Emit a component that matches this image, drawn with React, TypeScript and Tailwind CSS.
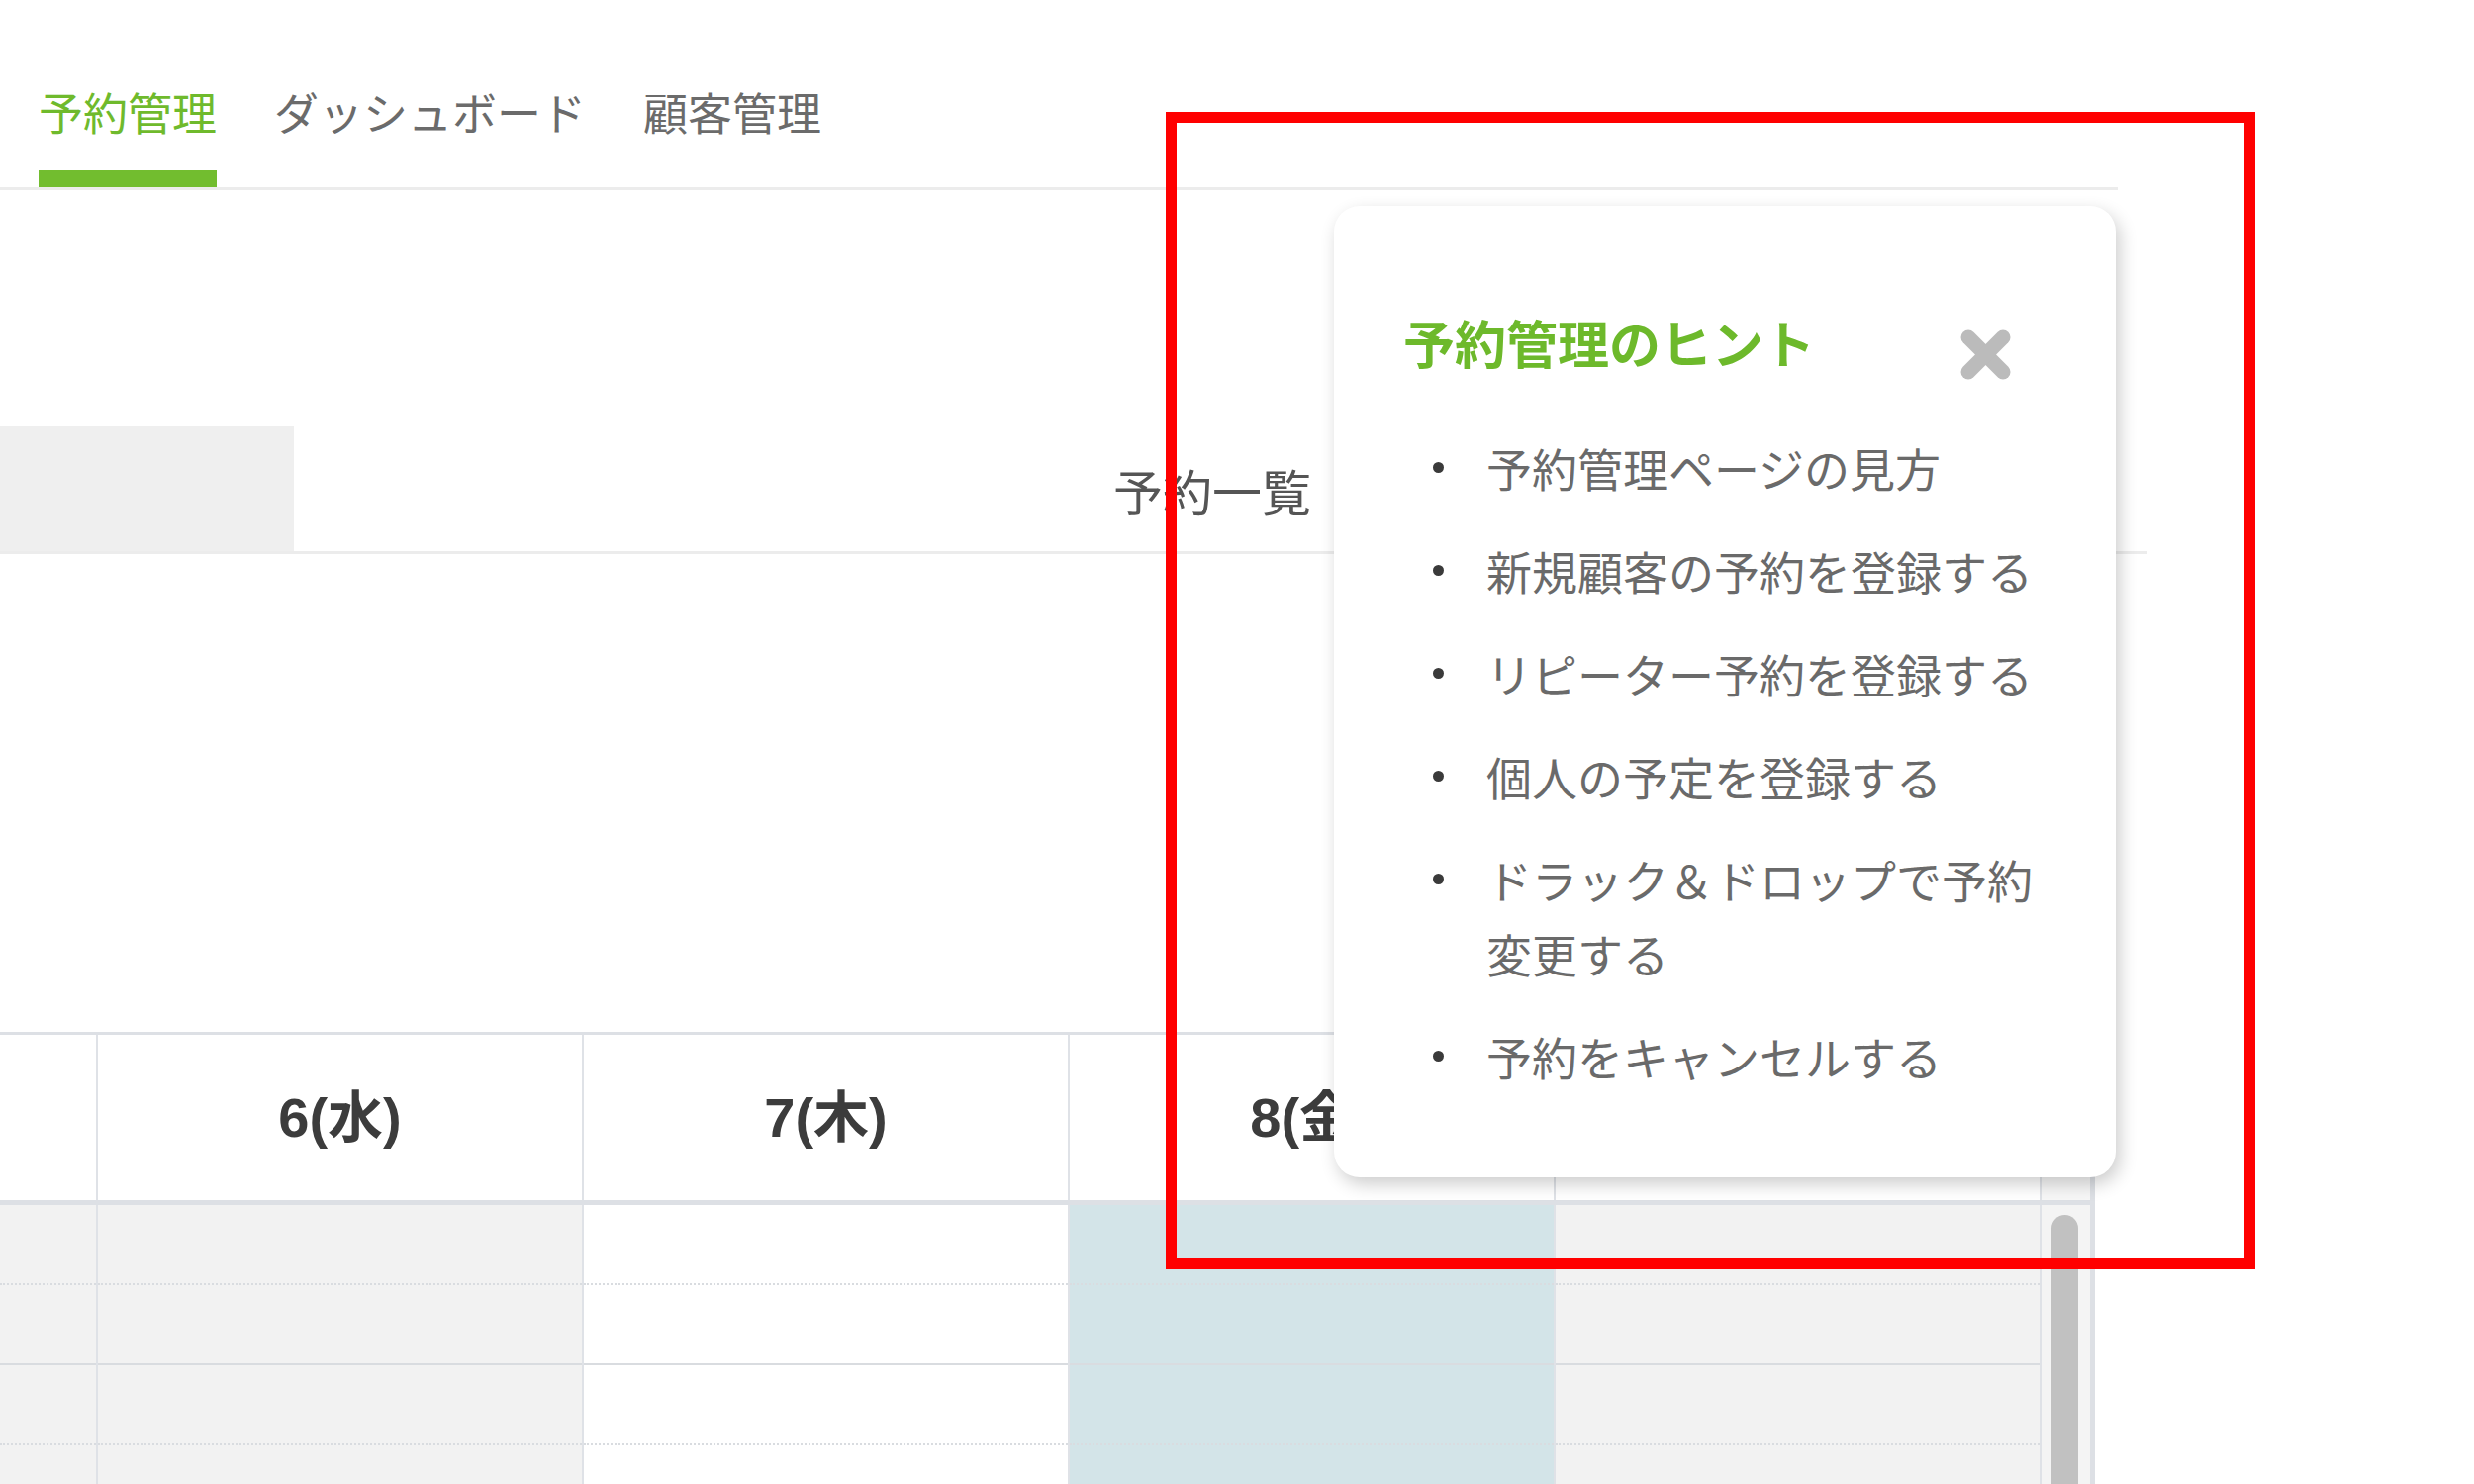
import React from 'react';

const tabs = [
  { label: '予約管理', active: true },
  { label: 'ダッシュボード', active: false },
  { label: '顧客管理', active: false },
];

const days = ['6(水)', '7(木)', '8(金)', '9(土)'];

const columns = [
  { width: 'w-[99px]', bg: 'bg-[#f2f2f2]' },
  { width: 'w-[491px]', bg: 'bg-[#f2f2f2]' },
  { width: 'w-[491px]', bg: 'bg-white' },
  { width: 'w-[491px]', bg: 'bg-[#d3e4e8]' },
  { width: 'w-[491px]', bg: 'bg-[#f2f2f2]' },
];

const hints = [
  '予約管理ページの見方',
  '新規顧客の予約を登録する',
  'リピーター予約を登録する',
  '個人の予定を登録する',
  'ドラック＆ドロップで予約変更する',
  '予約をキャンセルする',
];

const CloseIcon: React.FC = () => (
  <svg width="53" height="53" viewBox="0 0 53 53" className="shrink-0">
    <g stroke="#bbbbbb" strokeWidth="15" strokeLinecap="round">
      <line x1="9" y1="9" x2="44" y2="44" />
      <line x1="44" y1="9" x2="9" y2="44" />
    </g>
  </svg>
);

const HintCard: React.FC = () => (
  <div className="absolute left-[1348px] top-[208px] w-[790px] rounded-[26px] bg-white pl-[70px] pr-[70px] pt-[108px] pb-[85px] shadow-[4px_7px_18px_rgba(0,0,0,0.2)]">
    <div className="flex items-start justify-between pr-[35px]">
      <h3 className="text-[52px] leading-[60px] font-bold text-[#6db92b]">予約管理のヒント</h3>
      <div className="mt-[16px]">
        <CloseIcon />
      </div>
    </div>
    <ul className="mt-[50px] pl-[30px] flex flex-col gap-[29px]">
      {hints.map((hint) => (
        <li key={hint} className="flex items-start">
          <span className="flex h-[75px] w-[54px] shrink-0 items-center">
            <span className="h-[11px] w-[11px] rounded-full bg-[#3a3a3a]" />
          </span>
          <span className="w-[566px] text-[46px] leading-[75px] text-[#6a6a6a]">{hint}</span>
        </li>
      ))}
    </ul>
  </div>
);

const App: React.FC = () => {
  return (
    <div className="relative h-[1500px] w-[2500px] overflow-hidden bg-white font-['Noto_Sans_CJK_JP',sans-serif]">
      {/* tabs */}
      <div className="flex h-[192px] w-[2140px] items-end gap-[52px] border-b-[3px] border-[#ececec] pl-[36px]">
        {tabs.map((tab) => (
          <div key={tab.label} className="flex flex-col px-[3px]">
            <span className={`text-[45px] leading-[45px] ${tab.active ? 'text-[#6fba2c]' : 'text-[#6b6b6b]'}`}>
              {tab.label}
            </span>
            <span className={`mt-[37px] h-[17px] ${tab.active ? 'bg-[#72bd2f]' : 'bg-transparent'}`} />
          </div>
        ))}
      </div>

      {/* toolbar */}
      <div className="flex h-[368px] w-[2170px] items-end border-b-[3px] border-[#ececec]">
        <div className="h-[126px] w-[297px] bg-[#efefef]" />
        <span className="ml-[828px] mb-[37px] text-[50px] leading-[50px] text-[#555]">予約一覧</span>
      </div>

      <div className="h-[483px]" />

      {/* calendar */}
      <div className="w-[2117px] font-['Liberation_Sans','Noto_Sans_CJK_JP',sans-serif]">
        <div className="flex h-[175px] border-t-[3px] border-b-[5px] border-[#dde0e5]">
          <div className="w-[99px] border-r-2 border-[#dfe2e7]" />
          {days.map((d) => (
            <div
              key={d}
              className="flex w-[491px] items-center justify-center border-r-2 border-[#dfe2e7] text-[56px] font-bold text-[#3c3c3c]"
            >
              {d}
            </div>
          ))}
          <div className="w-[54px] border-r-[5px] border-[#dde0e5] bg-[#f7f7f7]" />
        </div>

        <div className="flex">
          {columns.map((col, ci) => (
            <div key={ci} className={`${col.width} ${col.bg} border-r-2 border-[#dfe2e7]`}>
              {[0, 1, 2, 3].map((r) => (
                <div
                  key={r}
                  className={`h-[81px] border-b-2 border-[#d9dce0] ${r % 2 === 0 ? 'border-dotted' : 'border-solid'}`}
                />
              ))}
            </div>
          ))}
          <div className="w-[54px] border-r-[5px] border-[#dde0e5] bg-[#f4f4f4] pl-[10px] pt-[10px]">
            <div className="h-[400px] w-[27px] rounded-full bg-[#c1c1c1]" />
          </div>
        </div>
      </div>

      <HintCard />

      {/* annotation frame */}
      <div className="pointer-events-none absolute left-[1178px] top-[113px] h-[1170px] w-[1101px] border-[11px] border-[#ff0000]" />
    </div>
  );
};

export default App;
